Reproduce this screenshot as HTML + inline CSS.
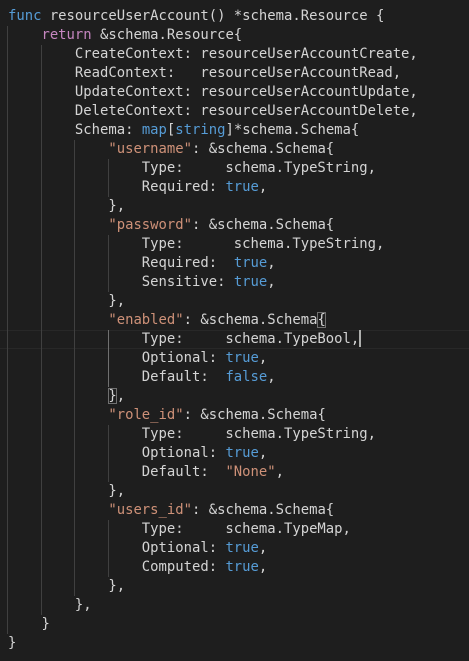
<!DOCTYPE html>
<html><head><meta charset="utf-8"><style>
html,body{margin:0;padding:0;background:#1e1e1e;width:469px;height:661px;overflow:hidden}
pre{position:absolute;left:8px;top:6.5px;margin:0;font-family:"DejaVu Sans Mono","Liberation Mono",monospace;font-size:13.9px;line-height:19px;color:#d4d4d4;white-space:pre}
.k{color:#569cd6}.r{color:#c586c0}.s{color:#ce9178}
.g{position:absolute;width:1px;background:#404040}
.hl{position:absolute;left:0;width:469px;top:329.5px;height:17px;border-top:1px solid #282828;border-bottom:1px solid #282828}
.bx{outline:1px solid #707070;outline-offset:-1px}
.cur{display:inline-block;width:1.5px;height:17px;background:#aeafad;vertical-align:-4px}
</style></head><body>
<div class="hl"></div>
<div class="g" style="left:7px;top:25.5px;height:608px"></div>
<div class="g" style="left:41px;top:44.5px;height:570px"></div>
<div class="g" style="left:74px;top:139.5px;height:456px"></div>
<div class="g" style="left:108px;top:158.5px;height:38px"></div>
<div class="g" style="left:108px;top:234.5px;height:57px"></div>
<div class="g" style="left:108px;top:329.5px;height:57px;background:#707070"></div>
<div class="g" style="left:108px;top:424.5px;height:57px"></div>
<div class="g" style="left:108px;top:519.5px;height:57px"></div>
<pre><span class="k">func</span> resourceUserAccount() *schema.Resource {
    <span class="r">return</span> &amp;schema.Resource{
        CreateContext: resourceUserAccountCreate,
        ReadContext:   resourceUserAccountRead,
        UpdateContext: resourceUserAccountUpdate,
        DeleteContext: resourceUserAccountDelete,
        Schema: <span class="k">map</span>[<span class="k">string</span>]*schema.Schema{
            <span class="s">"username"</span>: &amp;schema.Schema{
                Type:     schema.TypeString,
                Required: <span class="k">true</span>,
            },
            <span class="s">"password"</span>: &amp;schema.Schema{
                Type:      schema.TypeString,
                Required:  <span class="k">true</span>,
                Sensitive: <span class="k">true</span>,
            },
            <span class="s">"enabled"</span>: &amp;schema.Schema<span class="bx">{</span>
                Type:     schema.TypeBool,<span class="cur"></span>
                Optional: <span class="k">true</span>,
                Default:  <span class="k">false</span>,
            <span class="bx">}</span>,
            <span class="s">"role_id"</span>: &amp;schema.Schema{
                Type:     schema.TypeString,
                Optional: <span class="k">true</span>,
                Default:  <span class="s">"None"</span>,
            },
            <span class="s">"users_id"</span>: &amp;schema.Schema{
                Type:     schema.TypeMap,
                Optional: <span class="k">true</span>,
                Computed: <span class="k">true</span>,
            },
        },
    }
}</pre>
</body></html>
